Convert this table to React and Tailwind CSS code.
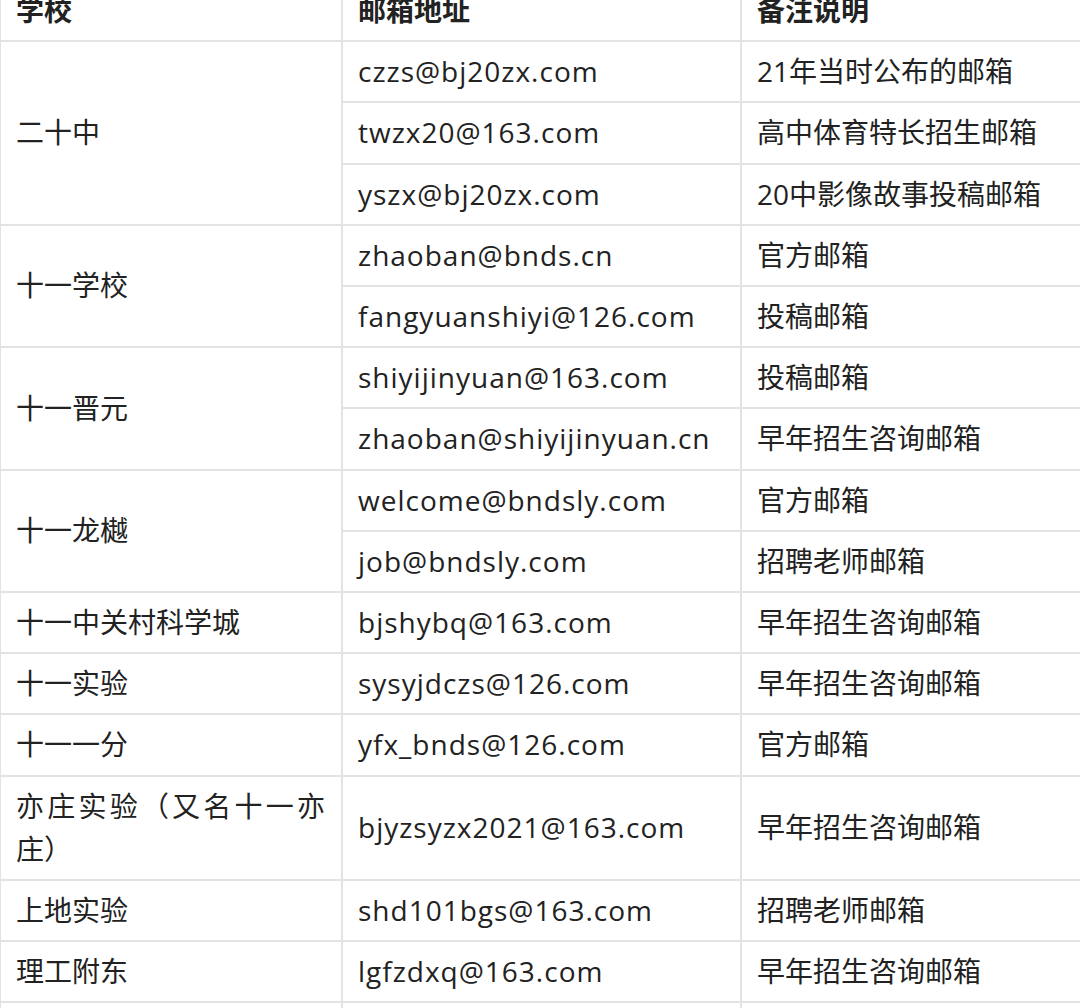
import React from "react";

const groups = [
  { school: "二十中", rows: [["czzs@bj20zx.com", "21年当时公布的邮箱"], ["twzx20@163.com", "高中体育特长招生邮箱"], ["yszx@bj20zx.com", "20中影像故事投稿邮箱"]] },
  { school: "十一学校", rows: [["zhaoban@bnds.cn", "官方邮箱"], ["fangyuanshiyi@126.com", "投稿邮箱"]] },
  { school: "十一晋元", rows: [["shiyijinyuan@163.com", "投稿邮箱"], ["zhaoban@shiyijinyuan.cn", "早年招生咨询邮箱"]] },
  { school: "十一龙樾", rows: [["welcome@bndsly.com", "官方邮箱"], ["job@bndsly.com", "招聘老师邮箱"]] },
  { school: "十一中关村科学城", rows: [["bjshybq@163.com", "早年招生咨询邮箱"]] },
  { school: "十一实验", rows: [["sysyjdczs@126.com", "早年招生咨询邮箱"]] },
  { school: "十一一分", rows: [["yfx_bnds@126.com", "官方邮箱"]] },
  { school: "亦庄实验（又名十一亦庄）", rows: [["bjyzsyzx2021@163.com", "早年招生咨询邮箱"]] },
  { school: "上地实验", rows: [["shd101bgs@163.com", "招聘老师邮箱"]] },
  { school: "理工附东", rows: [["lgfzdxq@163.com", "早年招生咨询邮箱"]] },
  { school: "理工附中", rows: [["lgfz@163.com", "官方邮箱"]] },
];

const cell = "border-2 border-[#e3e3e3] pl-[15px] pr-4 py-[8px] align-middle";

export default function App() {
  return (
    <div
      className="w-[1080px] h-[1008px] overflow-hidden bg-white text-[#222]"
      style={{ fontFamily: '"Open Sans", "Noto Sans CJK SC", sans-serif' }}
    >
      <table className="-mt-[21px] -ml-[1px] border-collapse table-fixed w-[1100px] text-[28px] leading-[43.2px]">
        <colgroup>
          <col className="w-[342px]" />
          <col className="w-[399px]" />
          <col className="w-[359px]" />
        </colgroup>
        <thead>
          <tr>
            <th className={cell + " text-left font-bold"}>学校</th>
            <th className={cell + " text-left font-bold"}>邮箱地址</th>
            <th className={cell + " text-left font-bold"}>备注说明</th>
          </tr>
        </thead>
        <tbody>
          {groups.map((g) =>
            g.rows.map((r, i) => (
              <tr key={g.school + i}>
                {i === 0 && (
                  <td rowSpan={g.rows.length} className={cell + " text-justify"}>
                    {g.school}
                  </td>
                )}
                <td className={cell + " text-left tracking-[1px]"}>{r[0]}</td>
                <td className={cell + " text-left"}>{r[1]}</td>
              </tr>
            ))
          )}
        </tbody>
      </table>
    </div>
  );
}
